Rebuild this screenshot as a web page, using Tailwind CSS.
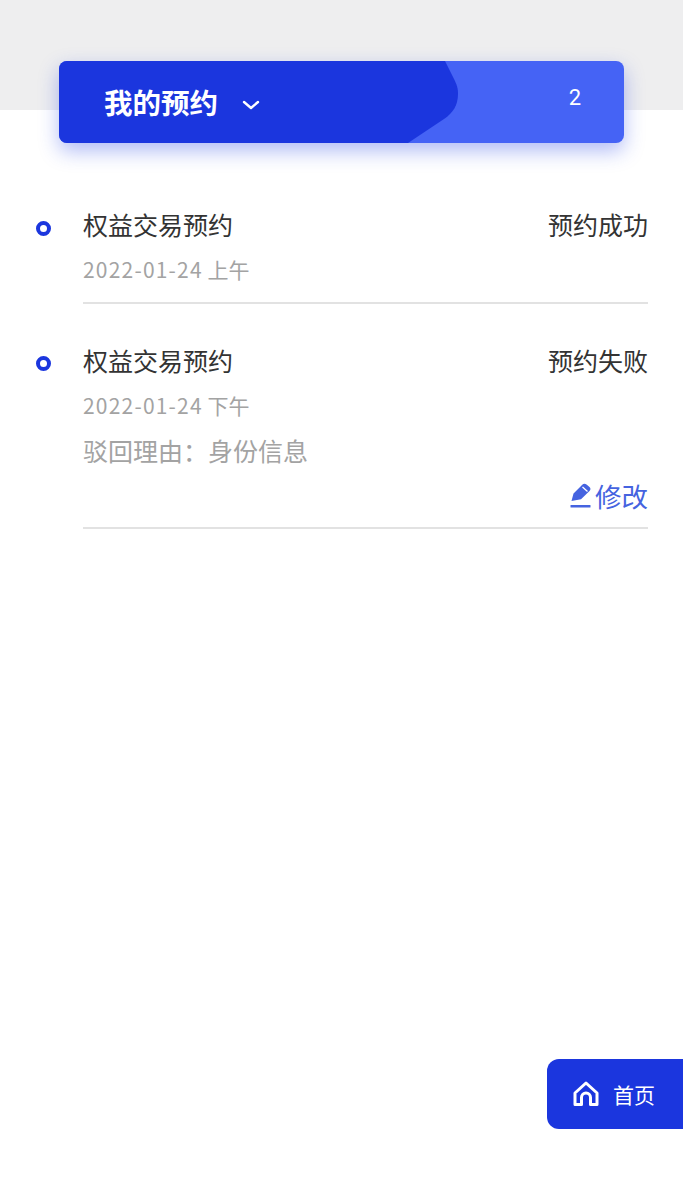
<!DOCTYPE html>
<html lang="zh-CN">
<head>
    <meta charset="UTF-8">
    <meta name="viewport" content="width=device-width, initial-scale=1.0">
    <title>我的预约</title>
    <script src="https://cdn.jsdelivr.net/npm/@tailwindcss/browser@4"></script>
</head>
<body class="bg-white font-['Noto_Sans_CJK_SC','Noto_Sans',sans-serif]">
    <div class="relative w-[683px] h-[1200px] overflow-hidden bg-white">
        <div class="h-[110px] bg-[#eeeeef]"></div>

        <!-- header card -->
        <div class="relative z-10 -mt-[49px] mx-[59px] h-[82px] rounded-lg bg-[#4563f5] shadow-[0_8px_20px_rgba(40,70,230,0.36)] overflow-hidden flex items-center justify-between">
            <svg class="absolute left-0 top-0" width="400" height="82" viewBox="0 0 400 82">
                <path d="M0 0H386L394 16C398 24 399 27 399 33C399 44 394 52 385 58L349 82H0Z" fill="#1b36de"/>
            </svg>
            <div class="relative flex items-center pl-[45px] text-white">
                <span class="text-[28.500px] leading-[40px] font-bold">我的预约</span>
                <svg class="ml-[24px] mt-[5px]" width="18" height="12" viewBox="0 0 18 12" fill="none" stroke="#fff" stroke-width="2.400" stroke-linecap="round" stroke-linejoin="round">
                    <path d="M2 3l7 6 7-6"/>
                </svg>
            </div>
            <span class="relative pr-[43px] -mt-[8px] text-white text-[22px] leading-[30px] font-['Roboto']">2</span>
        </div>

        <!-- list -->
        <div class="pt-[63px]">
            <div class="flex pl-[36px] pr-[35px]">
                <div class="w-[15px] h-[15px] mt-[15px] rounded-full border-[4px] border-[#1b36de]"></div>
                <div class="ml-[32px] flex-1 border-b-2 border-[#e2e2e2] pb-[18px]">
                    <div class="flex justify-between text-[25px] leading-[36px] text-[#333333]">
                        <span>权益交易预约</span>
                        <span>预约成功</span>
                    </div>
                    <div class="mt-[12px] text-[21px] leading-[30px] text-[#a3a3a3]"><span class="tracking-[1.200px]">2022-01-24</span> 上午</div>
                </div>
            </div>

            <div class="flex pl-[36px] pr-[35px] mt-[38px]">
                <div class="w-[15px] h-[15px] mt-[14px] rounded-full border-[4px] border-[#1b36de]"></div>
                <div class="ml-[32px] flex-1 border-b-2 border-[#e2e2e2] pb-[13px]">
                    <div class="flex justify-between text-[25px] leading-[36px] text-[#333333]">
                        <span>权益交易预约</span>
                        <span>预约失败</span>
                    </div>
                    <div class="mt-[12px] text-[21px] leading-[30px] text-[#a3a3a3]"><span class="tracking-[1.200px]">2022-01-24</span> 下午</div>
                    <div class="mt-[12px] text-[25px] leading-[36px] text-[#a3a3a3]">驳回理由：身份信息</div>
                    <div class="mt-[10px] flex justify-end items-center text-[26.500px] leading-[36px] text-[#4563e0]">
                        <svg class="mr-[3px]" width="22" height="26" viewBox="0 0 22 26" fill="#4563e0">
                            <path d="M1.500 18L3.500 10.500L12 2C13.500 .5 15 .5 16.500 1.500L19.500 4C20.800 5.200 20.800 6.800 19.500 8L11 16.300Z"/>
                            <path d="M12.500 4L17.500 8.500" stroke="#fff" stroke-width="1.300"/>
                            <rect x="0.500" y="22" width="20" height="2.600" rx="0.600"/>
                        </svg>
                        <span>修改</span>
                    </div>
                </div>
            </div>
        </div>

        <!-- floating home button -->
        <div class="absolute left-[547px] top-[1059px] w-[136px] h-[70px] rounded-l-xl bg-[#1b36de] flex items-center pl-[26px] text-white">
            <svg width="26" height="26" viewBox="0 0 26 26" fill="none" stroke="#fff" stroke-width="3" stroke-linejoin="round" stroke-linecap="round">
                <path d="M2 12L13 2l11 10v11.500h-6.500V16.500a4.500 4.500 0 0 0-9 0v7H2Z"/>
            </svg>
            <span class="ml-[14px] text-[21px] leading-[30px]">首页</span>
        </div>
    </div>
</body>
</html>
